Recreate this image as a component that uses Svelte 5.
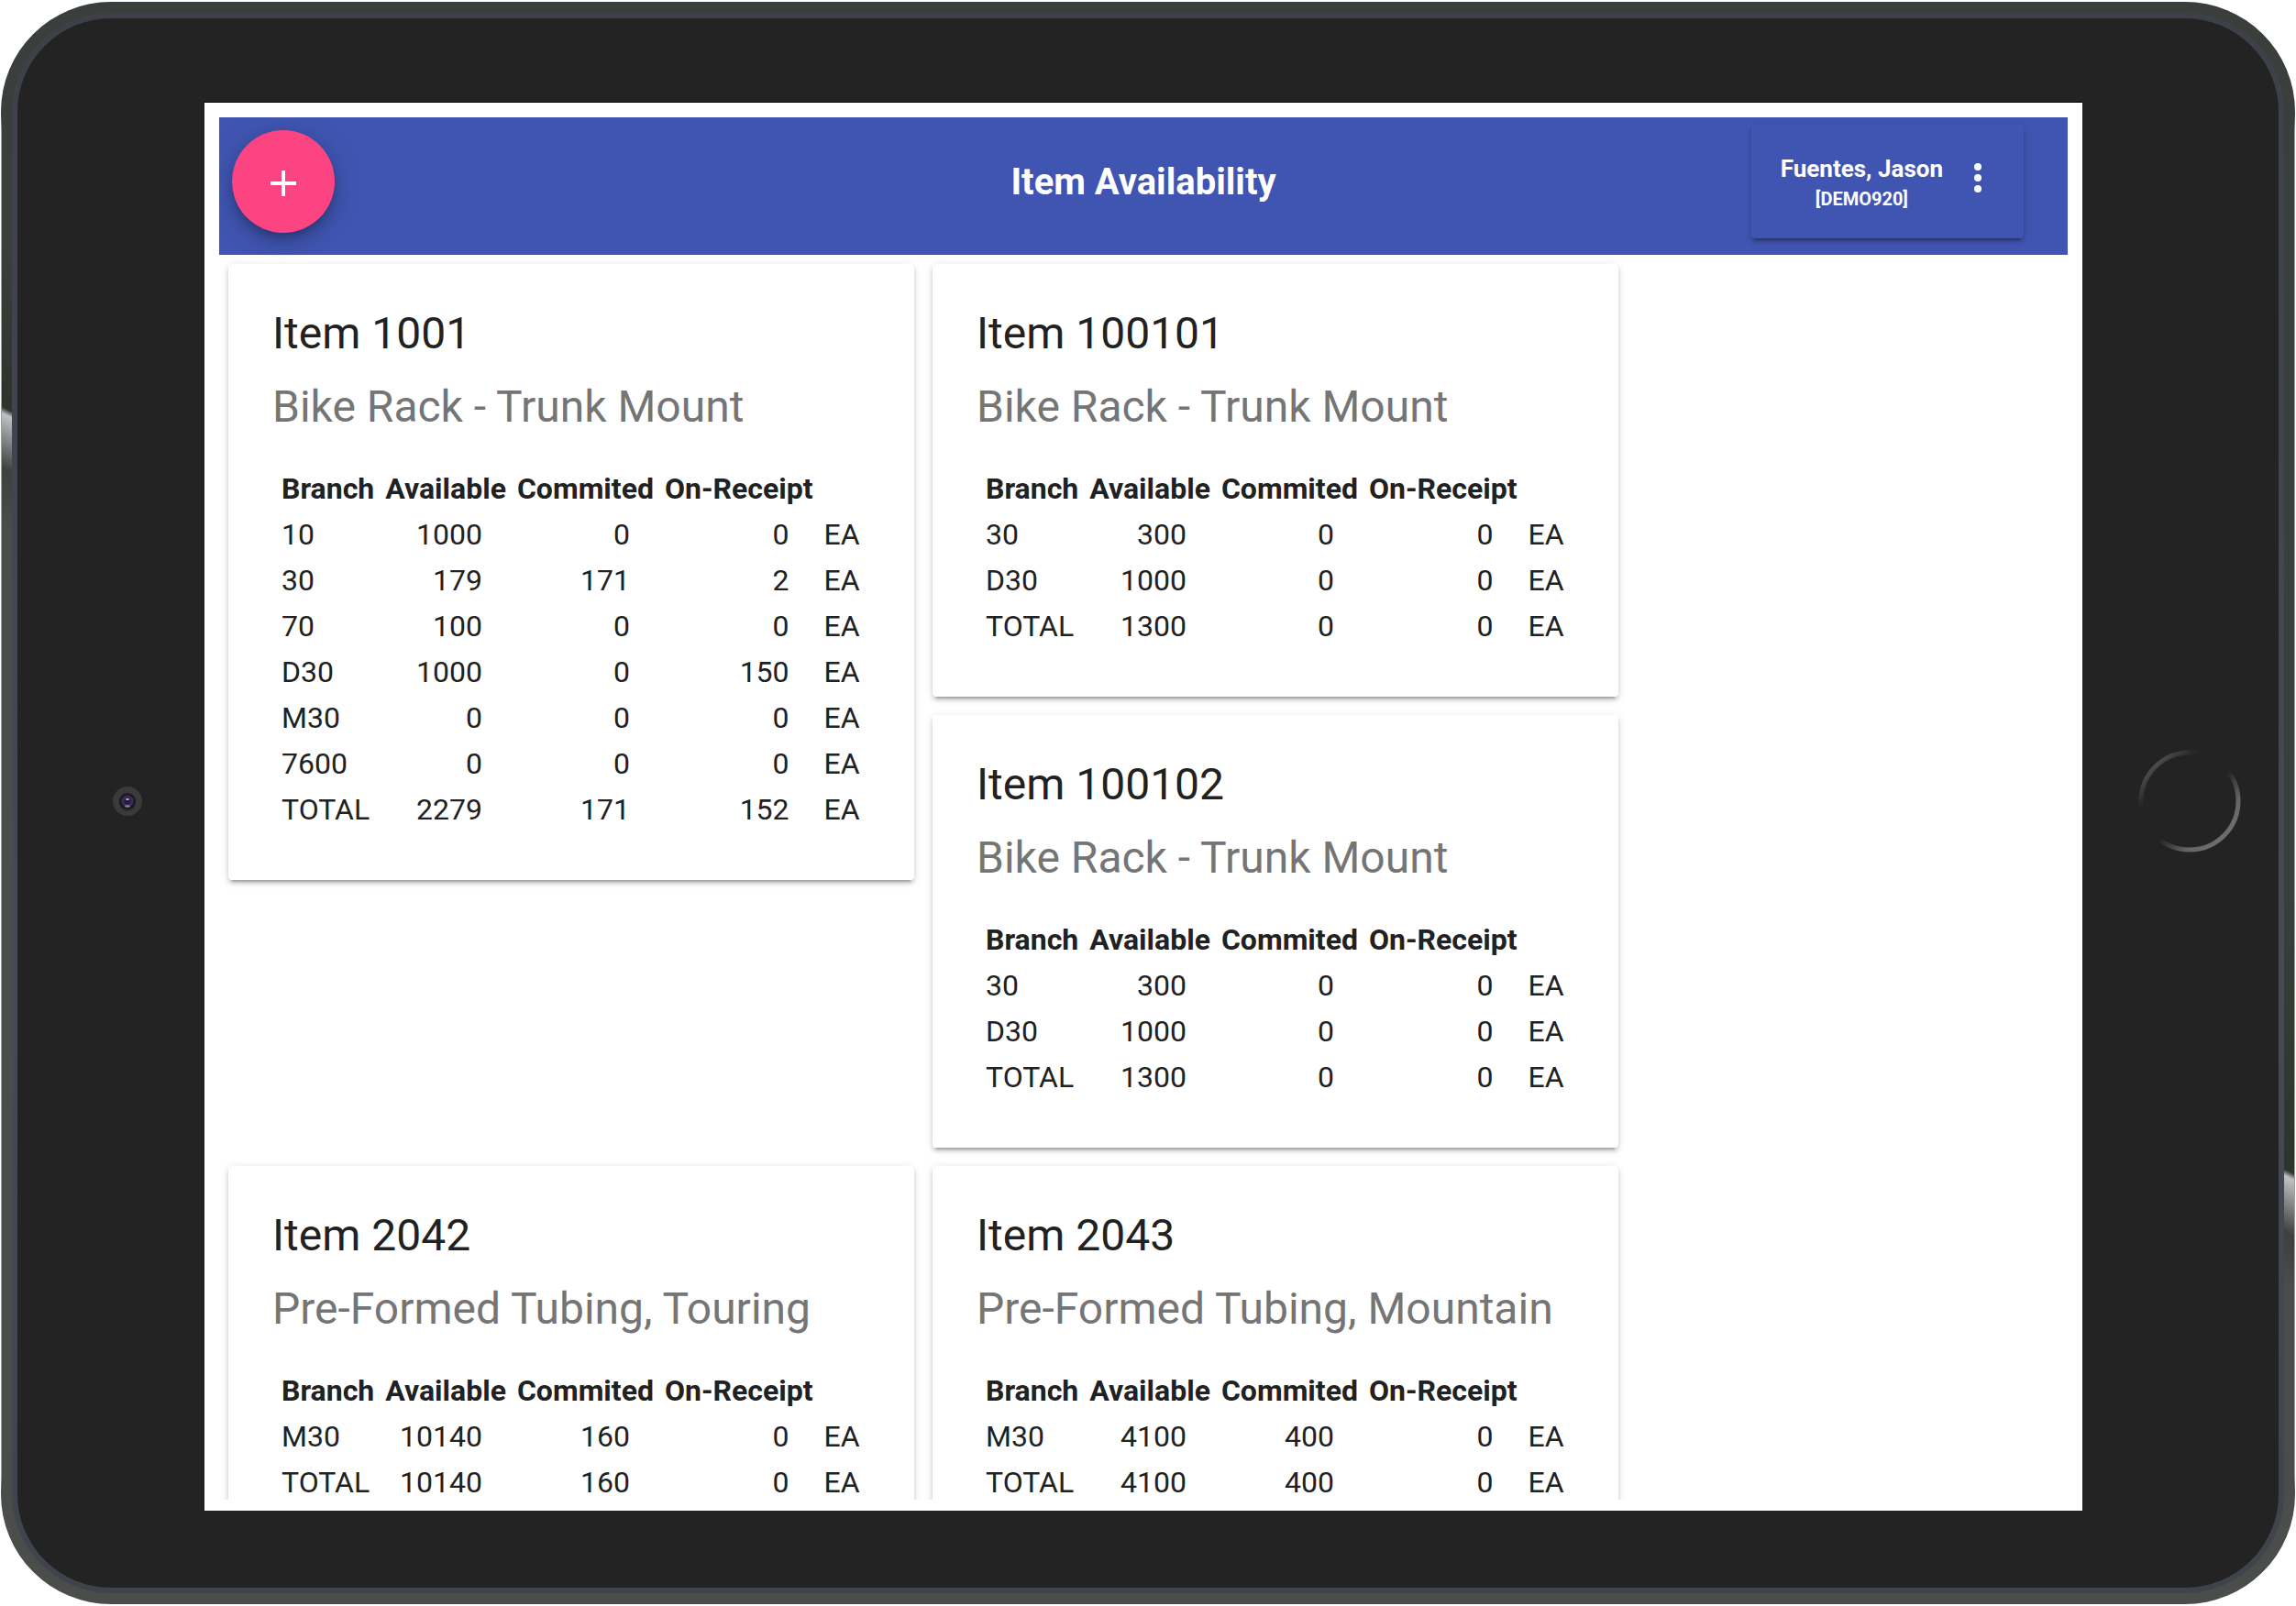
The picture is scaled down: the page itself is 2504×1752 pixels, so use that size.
<script lang="ts">
  type Row = { branch: string; available: number; commited: number; onReceipt: number; um: string }
  type Item = { id: string; description: string; rows: Row[] }

  const row = (branch: string, available: number, commited = 0, onReceipt = 0): Row => ({
    branch,
    available,
    commited,
    onReceipt,
    um: 'EA'
  })

  const user = { name: 'Fuentes, Jason', environment: 'DEMO920' }

  const items: Item[] = [
    {
      id: '1001',
      description: 'Bike Rack - Trunk Mount',
      rows: [
        row('10', 1000),
        row('30', 179, 171, 2),
        row('70', 100),
        row('D30', 1000, 0, 150),
        row('M30', 0),
        row('7600', 0),
        row('TOTAL', 2279, 171, 152)
      ]
    },
    {
      id: '100101',
      description: 'Bike Rack - Trunk Mount',
      rows: [row('30', 300), row('D30', 1000), row('TOTAL', 1300)]
    },
    {
      id: '100102',
      description: 'Bike Rack - Trunk Mount',
      rows: [row('30', 300), row('D30', 1000), row('TOTAL', 1300)]
    },
    {
      id: '2042',
      description: 'Pre-Formed Tubing, Touring',
      rows: [row('M30', 10140, 160), row('TOTAL', 10140, 160)]
    },
    {
      id: '2043',
      description: 'Pre-Formed Tubing, Mountain',
      rows: [row('M30', 4100, 400), row('TOTAL', 4100, 400)]
    }
  ]
</script>

<div class="stage">
  <div class="device">
    <div class="rim">
      <div class="face">
        <div class="bezel left">
          <svg class="camera" viewBox="0 0 32 32" aria-hidden="true">
            <circle cx="16" cy="16" r="16" fill="#3a3a3a" />
            <circle cx="16" cy="18" r="9" fill="#2b2b2b" />
            <circle cx="16" cy="16" r="9" fill="#1b1a1e" />
            <circle cx="16" cy="16" r="6.5" fill="#3c2a5a" />
            <circle cx="16" cy="16" r="3.5" fill="#241d33" />
            <ellipse cx="16" cy="14" rx="2" ry="1" fill="#b9b4c4" />
            <ellipse cx="16" cy="21.5" rx="3" ry="1.2" fill="#8b7fa3" />
          </svg>
        </div>

        <div class="screen">
          <div class="app">
            <header>
              <button class="fab" aria-label="Add item">
                <svg viewBox="0 0 48 48"><path d="M38 26H26v12h-4V26H10v-4h12V10h4v12h12z" /></svg>
              </button>
              <h1>Item Availability</h1>
              <div class="user">
                <div class="who">
                  <strong>{user.name}</strong>
                  <small>[{user.environment}]</small>
                </div>
                <button class="more" aria-label="User menu">
                  <svg viewBox="0 0 48 48">
                    <circle cx="24" cy="12" r="4" />
                    <circle cx="24" cy="24" r="4" />
                    <circle cx="24" cy="36" r="4" />
                  </svg>
                </button>
              </div>
            </header>

            <main>
              {#each items as item}
                <section class="card" class:tall={item.rows.length > 4}>
                  <h2>Item {item.id}</h2>
                  <p>{item.description}</p>
                  <table>
                    <thead>
                      <tr>
                        <th>Branch</th>
                        <th>Available</th>
                        <th>Commited</th>
                        <th>On-Receipt</th>
                        <td></td>
                      </tr>
                    </thead>
                    <tbody>
                      {#each item.rows as r}
                        <tr>
                          <td>{r.branch}</td>
                          <td class="num">{r.available}</td>
                          <td class="num">{r.commited}</td>
                          <td class="num">{r.onReceipt}</td>
                          <td>{r.um}</td>
                        </tr>
                      {/each}
                    </tbody>
                  </table>
                </section>
              {/each}
            </main>
          </div>
        </div>

        <div class="bezel right">
          <svg class="home" viewBox="0 0 112 112" aria-hidden="true">
            <defs>
              <linearGradient id="ring" gradientUnits="userSpaceOnUse" x1="16" y1="16" x2="96" y2="96">
                <stop offset="0" stop-color="#4e4e4e" />
                <stop offset="0.22" stop-color="#232323" />
                <stop offset="0.56" stop-color="#232323" />
                <stop offset="0.82" stop-color="#666" />
                <stop offset="1" stop-color="#6e6e6e" />
              </linearGradient>
            </defs>
            <circle cx="56" cy="56" r="53" fill="none" stroke="url(#ring)" stroke-width="5" />
          </svg>
        </div>
      </div>
    </div>
  </div>
</div>

<style>
  :global(body) {
    background: #fff;
    font-family: Roboto, 'Liberation Sans', sans-serif;
    color: #212121;
  }
  * {
    box-sizing: border-box;
  }
  .stage {
    height: 100vh;
    padding: 2px 1px;
  }

  /* tablet body */
  .device {
    height: 100%;
    padding: 12px;
    border-radius: 120px;
    background:
      linear-gradient(transparent 7%, #9a9f9b 8%, #9a9f9b 92%, transparent 93%) left / 1px 100% no-repeat,
      linear-gradient(transparent 7%, #9a9f9b 8%, #9a9f9b 92%, transparent 93%) right / 1px 100% no-repeat,
      linear-gradient(206deg, #3a3f3b 16%, #2e332c 25.6%, #bfc1c3 26%, #3e403f 29.4%, #4b4d4a 33%) left / 18px 100% no-repeat,
      linear-gradient(206deg, #3a3f3b 56%, #2e332c 72.8%, #bfc1c3 73.2%, #3e403f 76.7%, #4b4d4a 80%) right / 18px 100% no-repeat,
      linear-gradient(#3a3f3b 50%, #4b4d4a 50%);
  }
  .rim {
    height: 100%;
    padding: 6px;
    border-radius: 108px;
    background: linear-gradient(#3d4049, #454a55 60%, #3f434c);
  }
  .face {
    height: 100%;
    display: flex;
    padding: 92px 0 84px;
    border-radius: 102px;
    background: #232323;
  }
  .bezel {
    flex: none;
    display: flex;
    align-items: center;
    justify-content: center;
  }
  .left {
    width: 204px;
    padding-left: 36px;
  }
  .right {
    width: 214px;
    padding-left: 20px;
  }
  .bezel svg {
    display: block;
    margin-bottom: 12px;
  }
  .camera {
    width: 32px;
    height: 32px;
  }
  .home {
    width: 112px;
    height: 112px;
  }
  .screen {
    flex: 1;
    min-width: 0;
    padding: 16px 16px 12px;
    background: #fff;
    box-shadow: 0 -1px #000;
  }
  .app {
    height: 100%;
    overflow: hidden;
  }

  header {
    height: 150px;
    display: grid;
    grid-template-columns: 1fr auto 1fr;
    align-items: start;
    padding: 8px 14px 0;
    background: #4055b2;
    color: #fff;
  }
  button {
    border: 0;
    padding: 0;
    color: inherit;
    background: none;
    cursor: pointer;
  }
  button svg {
    display: block;
    width: 48px;
    height: 48px;
    fill: currentColor;
  }
  .fab {
    width: 112px;
    height: 112px;
    margin-top: 6px;
    padding: 4px 32px 0;
    border-radius: 50%;
    background: #fd4482;
    box-shadow:
      0 6px 10px -2px rgba(0, 0, 0, 0.2),
      0 12px 20px rgba(0, 0, 0, 0.14),
      0 2px 36px rgba(0, 0, 0, 0.12);
  }
  h1 {
    margin: 39px 0 0;
    font-size: 40px;
    line-height: 48px;
    font-weight: 700;
  }
  .user {
    justify-self: end;
    height: 124px;
    margin-right: 34px;
    display: flex;
    align-items: flex-start;
    gap: 14px;
    padding: 30px 26px 0 32px;
    border-radius: 4px;
    box-shadow:
      0 6px 2px -4px rgba(0, 0, 0, 0.2),
      0 4px 4px rgba(0, 0, 0, 0.14),
      0 2px 10px rgba(0, 0, 0, 0.12);
  }
  .who {
    display: flex;
    flex-direction: column;
    text-align: center;
  }
  .who strong {
    font-size: 26px;
    line-height: 36px;
  }
  .who small {
    font-size: 20px;
    line-height: 30px;
    font-weight: 700;
  }
  .more {
    margin-top: 4px;
  }

  main {
    display: grid;
    grid-template-columns: repeat(auto-fill, 748px);
    align-items: start;
    gap: 20px;
    padding: 10px;
  }
  .card {
    min-height: 472px;
    padding: 48px 48px 50px;
    border-radius: 4px;
    background: #fff;
    box-shadow:
      0 6px 2px -4px rgba(0, 0, 0, 0.2),
      0 4px 4px rgba(0, 0, 0, 0.14),
      0 2px 10px rgba(0, 0, 0, 0.12);
  }
  .tall {
    grid-row: span 2;
  }
  h2,
  .card p {
    margin: 0;
    font-size: 48px;
    line-height: 56px;
    font-weight: 400;
  }
  .card p {
    margin: 24px 0 34px;
    color: #757575;
  }
  table {
    margin-left: 2px;
    border-spacing: 4px;
    font-size: 32px;
    line-height: 38px;
  }
  th,
  td {
    padding: 4px;
    text-align: left;
  }
  .num {
    padding-right: 30px;
    text-align: right;
  }
</style>
